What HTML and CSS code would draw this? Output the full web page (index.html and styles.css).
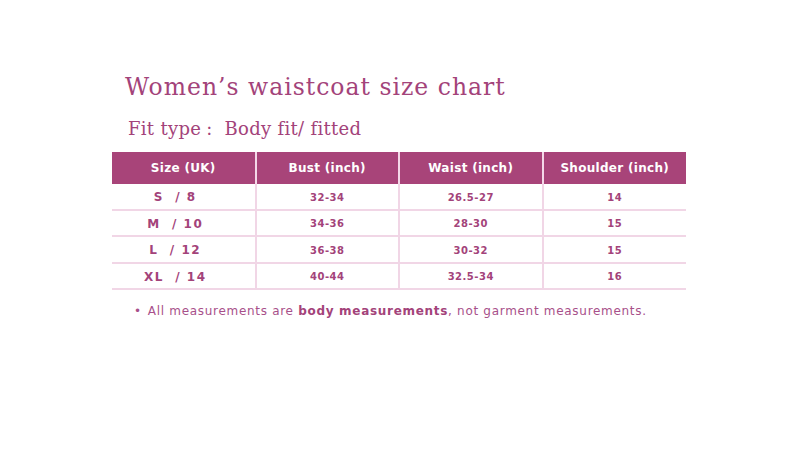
FILE: index.html
```html
<!DOCTYPE html>
<html lang="en">
<head>
    <meta charset="UTF-8">
    <meta name="viewport" content="width=device-width, initial-scale=1.0">
    <title>Women's waistcoat size chart</title>
    <link rel="stylesheet" href="styles.css">
</head>
<body>
    <div class="chart">
        <h1 class="chart-title">Women’s waistcoat size chart</h1>
        <p class="fit-type">Fit type<span class="colon">:</span> Body fit/ fitted</p>
        <table class="size-table">
            <thead>
                <tr>
                    <th>Size (UK)</th>
                    <th>Bust (inch)</th>
                    <th>Waist (inch)</th>
                    <th>Shoulder (inch)</th>
                </tr>
            </thead>
            <tbody>
                <tr><td class="size">S &nbsp;/ 8</td><td>32-34</td><td>26.5-27</td><td>14</td></tr>
                <tr><td class="size">M &nbsp;/ 10</td><td>34-36</td><td>28-30</td><td>15</td></tr>
                <tr><td class="size">L &nbsp;/ 12</td><td>36-38</td><td>30-32</td><td>15</td></tr>
                <tr><td class="size">XL &nbsp;/ 14</td><td>40-44</td><td>32.5-34</td><td>16</td></tr>
            </tbody>
        </table>
        <p class="note"><span class="bullet">•</span>All measurements are <b>body measurements</b>, not garment measurements.</p>
    </div>
</body>
</html>
```

FILE: styles.css
```css
body {
    margin: 0;
    background: #fff;
    font-family: 'DejaVu Sans', sans-serif;
    color: #a3437a;
}
.chart {
    width: 574px;
    padding: 72px 0 0 112px;
}
.chart-title {
    margin: 0 0 0 13px;
    font-family: 'DejaVu Serif', serif;
    font-weight: normal;
    font-size: 23.5px;
    letter-spacing: 1px;
    line-height: 30px;
    color: #a3437a;
}
.fit-type {
    margin: 16px 0 0 16px;
    font-family: 'DejaVu Serif', serif;
    font-size: 18px;
    line-height: 22px;
    letter-spacing: 0.3px;
}
.colon {
    margin: 0 6px 0 5px;
}
.size-table {
    width: 100%;
    margin-top: 12px;
    border-collapse: collapse;
    table-layout: fixed;
}
.size-table th {
    height: 32px;
    padding: 0;
    background: #a84479;
    color: #fff;
    font-size: 12px;
    font-weight: bold;
    letter-spacing: 0.3px;
    border-left: 2px solid #f4d8e8;
}
.size-table th:first-child {
    border-left: none;
}
.size-table td {
    height: 22.5px;
    padding: 2px 0 0;
    text-align: center;
    font-size: 10px;
    font-weight: bold;
    letter-spacing: 0.5px;
    border-bottom: 2px solid #f1d6e6;
    border-left: 2px solid #f1d6e6;
}
.size-table td:first-child {
    border-left: none;
}
.size-table td.size {
    padding-right: 16px;
    font-size: 12px;
    letter-spacing: 1.5px;
}
.note {
    margin: 14px 0 0 22px;
    font-size: 12px;
    letter-spacing: 0.7px;
    color: #a8508a;
}
.note b {
    color: #a3437a;
}
.bullet {
    margin-right: 6px;
}
```
